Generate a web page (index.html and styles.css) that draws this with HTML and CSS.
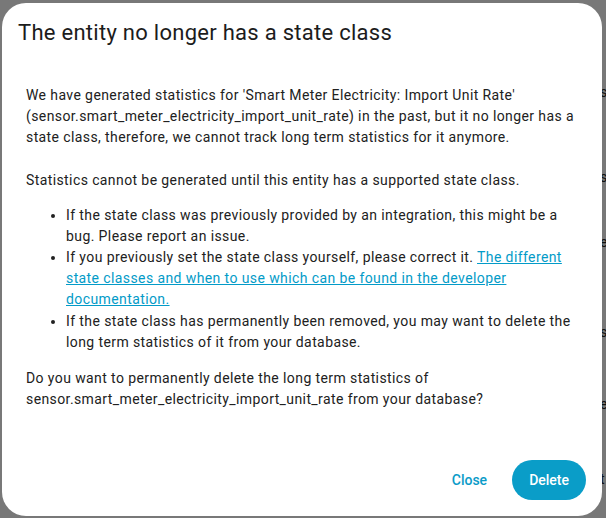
FILE: index.html
```html
<!DOCTYPE html>
<html>
<head>
<meta charset="utf-8">
<link rel="stylesheet" href="styles.css">
</head>
<body>
<div class="page">
  <div class="bg-line l1">s</div>
  <div class="bg-line l2">s</div>
  <div class="bg-line l3">e</div>
  <div class="bg-line l4">s</div>
  <div class="bg-line l5">e</div>
  <div class="bg-line l6">t</div>
</div>
<div class="scrim"></div>
<div class="dialog">
  <h2 class="title">The entity no longer has a state class</h2>
  <div class="content">
    <p class="para">We have generated statistics for 'Smart Meter Electricity: Import Unit Rate' (sensor.smart_meter_electricity_import_unit_rate) in the past, but it no longer has a state class, therefore, we cannot track long term statistics for it anymore.<br><br>Statistics cannot be generated until this entity has a supported state class.</p>
    <ul class="list">
      <li>If the state class was previously provided by an integration, this might be a bug. Please report an issue.</li>
      <li>If you previously set the state class yourself, please correct it. <a class="link" href="#">The different state classes and when to use which can be found in the developer documentation.</a></li>
      <li>If the state class has permanently been removed, you may want to delete the long term statistics of it from your database.</li>
    </ul>
    <p class="para">Do you want to permanently delete the long term statistics of sensor.smart_meter_electricity_import_unit_rate from your database?</p>
  </div>
  <div class="actions">
    <button class="btn btn-text">Close</button>
    <button class="btn btn-filled">Delete</button>
  </div>
</div>
</body>
</html>
```

FILE: styles.css
```css
html, body {
  margin: 0;
  padding: 0;
  width: 606px;
  height: 518px;
  overflow: hidden;
  font-family: Roboto, "Noto Sans", sans-serif;
}
.page {
  position: relative;
  width: 606px;
  height: 518px;
  background: #ffffff;
  color: #212121;
  font-size: 14px;
}
.bg-line {
  position: absolute;
  left: 600px;
}
.l1 { top: 84px; }
.l2 { top: 169px; }
.l3 { top: 234px; }
.l4 { top: 324px; }
.l5 { top: 396px; }
.l6 { top: 471px; }
.scrim {
  position: absolute;
  inset: 0;
  background: rgba(0, 0, 0, 0.53);
}
.dialog {
  position: absolute;
  left: 2px;
  top: 3px;
  width: 600px;
  height: 513px;
  box-sizing: border-box;
  background: #ffffff;
  border-radius: 24px;
  display: flex;
  flex-direction: column;
  padding: 16px 16px 16px 24px;
  color: #212121;
}
.title {
  margin: 0 0 0 -8px;
  font-size: 22px;
  font-weight: 400;
  line-height: 28px;
  letter-spacing: 0.0125em;
  color: #1c1c1c;
}
.content {
  margin-top: 38px;
  font-size: 14px;
  line-height: 21.15px;
  letter-spacing: 0.4px;
  padding-right: 4px;
}
.para {
  margin: 0;
}
.list {
  margin: 14px 0 15px;
  padding-left: 40px;
}
.link {
  color: #039bc8;
  text-decoration: underline;
}
.actions {
  margin-top: auto;
  display: flex;
  justify-content: flex-end;
  gap: 8px;
}
.btn {
  font-family: Roboto, "Noto Sans", sans-serif;
  font-size: 14px;
  font-weight: 500;
  height: 40px;
  border: none;
  border-radius: 20px;
  padding: 0 17px;
  cursor: pointer;
}
.btn-text {
  background: transparent;
  color: #0a9bc8;
}
.btn-filled {
  background: #0a9dc8;
  color: #ffffff;
}
```
